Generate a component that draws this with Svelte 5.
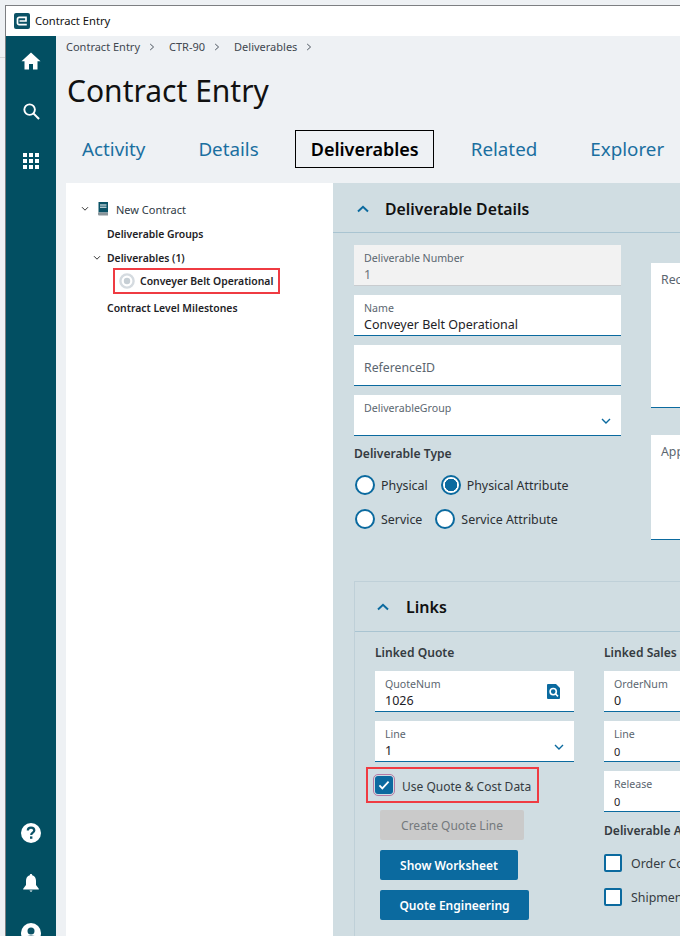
<script>
  const tabs = ['Activity', 'Details', 'Deliverables', 'Related', 'Explorer'];
  const crumbs = ['Contract Entry', 'CTR-90', 'Deliverables'];
</script>

<div class="page">
  <div class="stray"></div>
  <div class="window">
    <header class="titlebar">
      <svg class="logo" viewBox="0 0 16 16" width="16" height="16" aria-hidden="true">
        <rect width="16" height="16" rx="2" fill="#0b5266" />
        <path d="M12.8 11.6H5.2A1.7 1.7 0 0 1 3.5 9.9V6.1A1.7 1.7 0 0 1 5.2 4.4H12V8H5.5" fill="none" stroke="#fff" stroke-width="1.7" />
      </svg>
      <span>Contract Entry</span>
    </header>
    <div class="body">
      <nav class="rail">
        <div class="rail-top">
          <svg viewBox="0 0 20 18" width="20" height="18" aria-hidden="true"><path d="M10 0.5 0.5 9.2H3.5V17.5H8V12H12V17.5H16.5V9.2H19.5Z" fill="#fff" /></svg>
          <svg viewBox="0 0 18 18" width="17" height="17" aria-hidden="true"><circle cx="7" cy="7" r="5.6" fill="none" stroke="#fff" stroke-width="2" /><path d="M11 11 17 17" stroke="#fff" stroke-width="2.2" /></svg>
          <svg viewBox="0 0 16 16" width="16" height="16" aria-hidden="true" fill="#fff">
            <rect width="4" height="4" /><rect x="6" width="4" height="4" /><rect x="12" width="4" height="4" />
            <rect y="6" width="4" height="4" /><rect x="6" y="6" width="4" height="4" /><rect x="12" y="6" width="4" height="4" />
            <rect y="12" width="4" height="4" /><rect x="6" y="12" width="4" height="4" /><rect x="12" y="12" width="4" height="4" />
          </svg>
        </div>
        <div class="rail-bottom">
          <svg viewBox="0 0 20 20" width="20" height="20" aria-hidden="true"><circle cx="10" cy="10" r="10" fill="#fff" /><path d="M6.8 7.6C6.8 5.6 8.2 4.6 10 4.6 11.9 4.6 13.3 5.7 13.3 7.4 13.3 9.6 10.2 9.7 10.2 12" fill="none" stroke="#0b5266" stroke-width="2.2" /><rect x="9" y="13.4" width="2.4" height="2.4" fill="#0b5266" /></svg>
          <svg viewBox="0 0 16 19" width="16" height="20" aria-hidden="true"><path d="M8 0.5C8.8 0.5 9.2 1 9.2 1.7 11.8 2.4 13 4.6 13 7.2V11.5L15.8 15.2V16H0.2V15.2L3 11.5V7.2C3 4.6 4.2 2.4 6.8 1.7 6.8 1 7.2 0.5 8 0.5Z" fill="#fff" /><path d="M6.4 17H9.6L8 18.6Z" fill="#fff" /></svg>
          <svg viewBox="0 0 20 20" width="20" height="20" aria-hidden="true"><circle cx="10" cy="10" r="10" fill="#fff" /><circle cx="10" cy="8" r="3.5" fill="#0b5266" /><path d="M3.5 16C4.5 13 7 12.4 10 12.4S15.5 13 16.5 16Z" fill="#0b5266" /></svg>
        </div>
      </nav>

      <main class="main">
        <div class="crumbs">
          {#each crumbs as c}
            <span>{c}</span>
            <svg viewBox="0 0 6 8" width="6" height="8" aria-hidden="true"><path d="M1.2 1 4.6 4 1.2 7" fill="none" stroke="#4d5660" stroke-width="1" /></svg>
          {/each}
        </div>
        <h1>Contract Entry</h1>
        <div class="tabs">
          {#each tabs as t, i}
            <span class="tab" class:active={i === 2}>{t}</span>
          {/each}
        </div>

        <div class="content">
          <aside class="tree">
            <div class="node root">
              <svg class="chev" viewBox="0 0 8 6" width="8" height="6" aria-hidden="true"><path d="M1 1.2 4 4.2 7 1.2" fill="none" stroke="#333" stroke-width="1" /></svg>
              <svg class="book" viewBox="0 0 12 14" width="12" height="14" aria-hidden="true"><path d="M1.5 0H11V10.5H1.5Z" fill="#0b5266" /><path d="M3 3H9.5M3 5.2H9.5" stroke="#fff" stroke-width="1" /><path d="M1 10.5H11V13.5H2.5C1.5 13.5 1 13 1 12Z" fill="#8a9499" /></svg>
              <span>New Contract</span>
            </div>
            <div class="node l1">Deliverable Groups</div>
            <div class="node l1 open">
              <svg class="chev" viewBox="0 0 8 6" width="8" height="6" aria-hidden="true"><path d="M1 1.2 4 4.2 7 1.2" fill="none" stroke="#333" stroke-width="1" /></svg>
              <span>Deliverables (1)</span>
            </div>
            <div class="node picked">
              <svg viewBox="0 0 16 16" width="16" height="16" aria-hidden="true"><circle cx="8" cy="8" r="6.6" fill="none" stroke="#d5dbe0" stroke-width="2.4" /><circle cx="8" cy="8" r="3.2" fill="#c6ced4" /></svg>
              <span>Conveyer Belt Operational</span>
            </div>
            <div class="node l1 last">Contract Level Milestones</div>
          </aside>

          <section class="details">
            <div class="sec-head">
              <svg viewBox="0 0 12 8" width="12" height="8" aria-hidden="true"><path d="M1 6.5 6 1.8 11 6.5" fill="none" stroke="#0b6a9f" stroke-width="2" /></svg>
              <h2>Deliverable Details</h2>
            </div>
            <div class="form-grid">
              <div class="col-left">
                <div class="field disabled"><label>Deliverable Number</label><div class="val">1</div></div>
                <div class="field"><label>Name</label><div class="val">Conveyer Belt Operational</div></div>
                <div class="field placeholder"><label>ReferenceID</label></div>
                <div class="field"><label>DeliverableGroup</label>
                  <svg class="caret" viewBox="0 0 10 6" width="10" height="6" aria-hidden="true"><path d="M1 1 5 5 9 1" fill="none" stroke="#0b6a9f" stroke-width="1.4" /></svg>
                </div>
                <div class="group-label type-label">Deliverable Type</div>
                <div class="radios">
                  <span class="radio"></span><span class="r-text first">Physical</span>
                  <span class="radio on"></span><span class="r-text">Physical Attribute</span>
                </div>
                <div class="radios second">
                  <span class="radio"></span><span class="r-text first-b">Service</span>
                  <span class="radio"></span><span class="r-text b">Service Attribute</span>
                </div>
              </div>
              <div class="col-right">
                <div class="area rec"><label>Reciting</label></div>
                <div class="area app"><label>Approval</label></div>
              </div>
            </div>

            <div class="links">
              <div class="links-head">
                <svg viewBox="0 0 12 8" width="12" height="8" aria-hidden="true"><path d="M1 6.5 6 1.8 11 6.5" fill="none" stroke="#0b6a9f" stroke-width="2" /></svg>
                <h3>Links</h3>
              </div>
              <div class="links-grid">
                <div class="q-col">
                  <div class="group-label">Linked Quote</div>
                  <div class="field"><label>QuoteNum</label><div class="val">1026</div>
                    <svg class="search" viewBox="0 0 13 15" width="13" height="15" aria-hidden="true"><path d="M1 0H9L13 4V14A1 1 0 0 1 12 15H1A1 1 0 0 1 0 14V1A1 1 0 0 1 1 0Z" fill="#0b6a9f" /><circle cx="6.2" cy="7.6" r="3.1" fill="#0b6a9f" stroke="#fff" stroke-width="1.6" /><path d="M8.4 9.8 11 12.4" stroke="#fff" stroke-width="1.6" /></svg>
                  </div>
                  <div class="field"><label>Line</label><div class="val">1</div>
                    <svg class="caret" viewBox="0 0 10 6" width="10" height="6" aria-hidden="true"><path d="M1 1 5 5 9 1" fill="none" stroke="#0b6a9f" stroke-width="1.4" /></svg>
                  </div>
                  <div class="use-box">
                    <span class="check">
                      <svg viewBox="0 0 14 12" width="12" height="10" aria-hidden="true"><path d="M1.5 6.5 5 10 12.5 2" fill="none" stroke="#fff" stroke-width="2.2" /></svg>
                    </span>
                    <span class="use-text">Use Quote &amp; Cost Data</span>
                  </div>
                  <div class="btns">
                    <button class="btn off w1">Create Quote Line</button>
                    <button class="btn w2">Show Worksheet</button>
                    <button class="btn w3">Quote Engineering</button>
                  </div>
                </div>
                <div class="s-col">
                  <div class="group-label">Linked Sales Order</div>
                  <div class="field"><label>OrderNum</label><div class="val">0</div></div>
                  <div class="field"><label>Line</label><div class="val small">0</div></div>
                  <div class="field"><label>Release</label><div class="val small">0</div></div>
                  <div class="group-label attr">Deliverable Attributes</div>
                  <div class="box-row"><span class="box"></span><span>Order Complete</span></div>
                  <div class="box-row"><span class="box"></span><span>Shipment Complete</span></div>
                </div>
              </div>
            </div>
          </section>
        </div>
      </main>
    </div>
  </div>
</div>

<style>
  :global(body) { margin: 0; }
  .page {
    position: relative;
    width: 680px;
    height: 936px;
    overflow: hidden;
    box-sizing: border-box;
    padding: 5px 0 0 5px;
    background: #eef1f4;
    font-family: "Noto Sans", "Open Sans", sans-serif;
    color: #2b2f33;
  }
  .stray {
    position: absolute;
    left: 0;
    top: 57px;
    width: 5px;
    height: 1px;
    background: #d4d6d8;
  }
  .window {
    height: 931px;
    box-sizing: border-box;
    border-top: 1px solid #7d7f82;
    border-left: 1px solid #7d7f82;
    display: flex;
    flex-direction: column;
    overflow: hidden;
  }
  .titlebar {
    height: 30px;
    flex: none;
    background: #fff;
    display: flex;
    align-items: center;
    gap: 5px;
    padding-left: 8px;
    font-size: 11.2px;
    line-height: 28px;
    color: #111;
  }
  .logo { flex: none; }
  .body { flex: 1; display: flex; min-height: 0; }
  .rail {
    width: 50px;
    flex: none;
    background: #024f62;
    display: flex;
    flex-direction: column;
    justify-content: space-between;
    align-items: center;
  }
  .rail-top { display: flex; flex-direction: column; align-items: center; gap: 33px; padding-top: 16px; }
  .rail-bottom { display: flex; flex-direction: column; align-items: center; gap: 30px; margin-bottom: -7px; }
  .main { flex: 1; min-width: 0; background: #eef1f4; overflow: hidden; }
  .crumbs {
    display: flex;
    align-items: center;
    height: 21px;
    padding: 0 0 0 10px;
    font-size: 11px;
    color: #3f4750;
  }
  .crumbs svg { margin: 0 14px 0 9px; flex: none; }
  .crumbs svg:last-child { margin-right: 0; }
  h1 {
    margin: 12px 0 0 11px;
    font-size: 30px;
    line-height: 44px;
    font-weight: 400;
    color: #111;
  }
  .tabs {
    display: flex;
    align-items: center;
    height: 38px;
    margin: 17px 0 15px;
    padding-left: 26px;
    font-size: 18.8px;
    color: #1a6fa0;
    white-space: nowrap;
  }
  .tab { margin-right: 53px; }
  .tab:nth-child(2) { margin-right: 36px; }
  .tab.active {
    height: 38px;
    box-sizing: border-box;
    border: 1px solid #000;
    padding: 0 15px;
    width: 139px;
    flex: none;
    line-height: 36px;
    font-size: 18px;
    font-weight: 600;
    color: #000;
    margin-right: 37px;
  }
  .content { display: flex; margin-left: 10px; height: 753px; }
  .tree {
    width: 267px;
    flex: none;
    background: #fff;
    padding-top: 17px;
    font-size: 11px;
    box-sizing: border-box;
  }
  .node { display: flex; align-items: center; height: 18px; margin-bottom: 6px; white-space: nowrap; }
  .root { padding-left: 15px; color: #2f3a44; margin-bottom: 7px; }
  .root .chev { margin-right: 8px; flex: none; }
  .root span { margin-left: 7px; }
  .book { flex: none; }
  .l1 { padding-left: 41px; font-size: 10.4px; font-weight: 600; color: #1e2226; }
  .l1.open { padding-left: 27px; }
  .l1.open .chev { margin-right: 6px; flex: none; }
  .picked {
    margin: -5px 0 5px 47px;
    width: 167px;
    height: 26px;
    box-sizing: border-box;
    border: 2px solid #ef3b42;
    padding-left: 4px;
    gap: 5px;
    font-size: 10.4px;
    font-weight: 600;
    color: #1e2226;
  }
  .picked svg { flex: none; }
  .details {
    flex: none;
    width: 347px;
    background: #d0dde2;
    overflow: hidden;
  }
  .sec-head {
    height: 50px;
    box-sizing: border-box;
    border-bottom: 1px solid #a9c4d1;
    display: flex;
    align-items: center;
    padding: 2px 0 0 24px;
    gap: 16px;
  }
  h2 { margin: 0; font-size: 15.8px; font-weight: 600; color: #111; white-space: nowrap; }
  .form-grid { display: flex; gap: 30px; padding: 12px 0 0 21px; height: 348px; box-sizing: border-box; }
  .col-left { width: 267px; flex: none; }
  .col-right { width: 200px; flex: none; }
  .field {
    position: relative;
    height: 41px;
    box-sizing: border-box;
    background: #fff;
    border-bottom: 1px solid #0b6a9f;
    padding: 6px 10px 0;
    margin-bottom: 9px;
  }
  .field label { display: block; font-size: 10.6px; line-height: 15px; color: #5b6670; }
  .val { font-size: 12.5px; line-height: 18px; color: #1e2226; white-space: nowrap; }
  .val.small { font-size: 11px; line-height: 20px; }
  .disabled { background: #f2f2f2; border-bottom-color: #c9cccf; }
  .disabled .val { color: #6d7378; }
  .placeholder label { font-size: 12.3px; line-height: 33px; }
  .caret { position: absolute; right: 10px; top: 23px; }
  .search { position: absolute; right: 14px; top: 13px; }
  .group-label { font-size: 12.1px; font-weight: 600; color: #353b41; white-space: nowrap; }
  .type-label { margin-top: 9px; line-height: 18px; }
  .radios { display: flex; align-items: center; margin-top: 12px; font-size: 12.4px; white-space: nowrap; height: 20px; margin-left: 1px; }
  .radios.second { margin-top: 14px; }
  .radio {
    width: 20px;
    height: 20px;
    box-sizing: border-box;
    border-radius: 50%;
    border: 2px solid #0b6a9f;
    background: #fff;
    flex: none;
    margin-right: 6px;
  }
  .radio.on { background: radial-gradient(circle, #0b6a9f 0 6px, #fff 6.5px); }
  .r-text.first { margin-right: 13px; }
  .r-text.first-b { margin-right: 13px; }
  .area {
    background: #fff;
    border-bottom: 1px solid #0b6a9f;
    padding: 8px 10px;
    box-sizing: border-box;
    font-size: 12.3px;
    color: #5b6670;
  }
  .rec { height: 145px; margin-top: 18px; }
  .app { height: 105px; margin-top: 27px; }
  .links {
    margin-left: 21px;
    width: 400px;
    height: 360px;
    border-top: 1px solid #bfd0d8;
    border-left: 1px solid #bfd0d8;
    box-sizing: border-box;
  }
  .links-head {
    height: 50px;
    box-sizing: border-box;
    border-bottom: 1px solid #a9c4d1;
    display: flex;
    align-items: center;
    padding-left: 22px;
    gap: 17px;
  }
  h3 { margin: 0; font-size: 16px; font-weight: 600; color: #111; }
  .links-grid { display: flex; gap: 30px; padding: 12px 0 0 20px; }
  .q-col { width: 199px; flex: none; }
  .s-col { width: 200px; flex: none; }
  .links-grid .group-label { line-height: 18px; margin-bottom: 9px; }
  .use-box {
    display: flex;
    align-items: center;
    gap: 9px;
    width: 173px;
    height: 36px;
    box-sizing: border-box;
    border: 2px solid #ef3b42;
    margin: -4px 0 0 -9px;
    padding-left: 7px;
    font-size: 12px;
    color: #353b41;
    white-space: nowrap;
  }
  .use-text { margin-top: 2px; }
  .check {
    width: 18px;
    height: 18px;
    flex: none;
    border-radius: 3px;
    background: #0b6a9f;
    outline: 1px solid #b67aa4;
    outline-offset: 1px;
    display: flex;
    align-items: center;
    justify-content: center;
  }
  .btns { display: flex; flex-direction: column; align-items: flex-start; gap: 10px; margin: 7px 0 0 5px; }
  .btn {
    height: 30px;
    border: 0;
    border-radius: 2px;
    padding: 0;
    background: #0b6a9f;
    color: #fff;
    font: 600 12px "Noto Sans", "Open Sans", sans-serif;
    white-space: nowrap;
  }
  .btn.off { background: #cacaca; color: #74797d; font-weight: 400; }
  .w1 { width: 144px; }
  .w2 { width: 138px; }
  .w3 { width: 149px; }
  .links-grid .group-label.attr { margin: 10px 0 14px; }
  .box-row { display: flex; align-items: center; gap: 9px; height: 18px; margin-bottom: 16px; font-size: 12.4px; color: #353b41; white-space: nowrap; }
  .box { width: 18px; height: 18px; box-sizing: border-box; background: #fff; border: 2px solid #0b6a9f; border-radius: 2px; flex: none; }
</style>
